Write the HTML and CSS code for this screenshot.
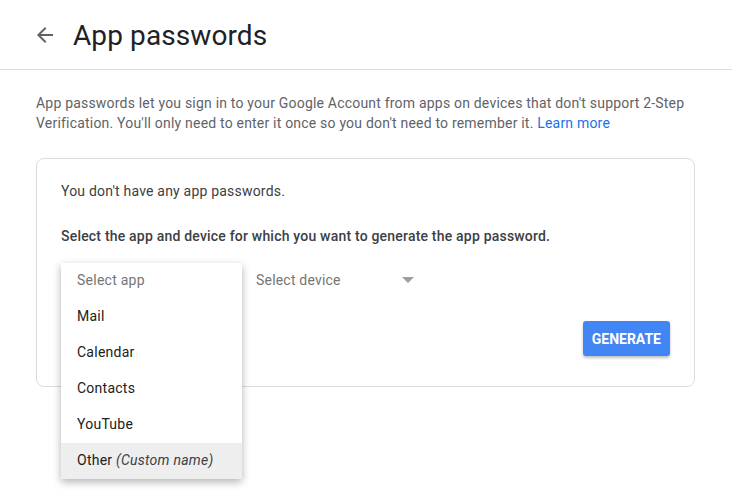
FILE: index.html
```html
<!DOCTYPE html>
<html lang="en">
<head>
<meta charset="UTF-8">
<meta name="viewport" content="width=device-width, initial-scale=1.0">
<title>App passwords</title>
<link rel="stylesheet" href="styles.css">
</head>
<body>
<header class="header">
  <a class="back" href="#" aria-label="Back">
    <svg width="24" height="24" viewBox="0 0 24 24"><path fill="#5f6368" d="M20 11H7.83l5.59-5.59L12 4l-8 8 8 8 1.41-1.41L7.83 13H20v-2z"/></svg>
  </a>
  <h1>App passwords</h1>
</header>

<main class="content">
  <p class="intro">App passwords let you sign in to your Google Account from apps on devices that don't support 2-Step Verification. You'll only need to enter it once so you don't need to remember it. <a href="#">Learn more</a></p>

  <div class="card">
    <p class="empty">You don't have any app passwords.</p>
    <p class="prompt">Select the app and device for which you want to generate the app password.</p>

    <div class="selects">
      <div class="select select-app">
        <span>Select app</span>
        <ul class="menu">
          <li class="placeholder">Select app</li>
          <li>Mail</li>
          <li>Calendar</li>
          <li>Contacts</li>
          <li>YouTube</li>
          <li class="active">Other <em>(Custom name)</em></li>
        </ul>
      </div>
      <div class="select select-device">
        <span>Select device</span>
        <span class="caret"></span>
      </div>
    </div>

    <div class="actions">
      <button class="generate">Generate</button>
    </div>
  </div>
</main>
</body>
</html>
```

FILE: styles.css
```css
html, body {
  min-height: 100%;
}
body {
  margin: 0;
  min-height: 499px;
  font-family: Roboto, Arial, sans-serif;
  background-color: #fff;
  color: #3c4043;
}
.header {
  display: flex;
  align-items: center;
  height: 69px;
  padding-left: 33px;
  border-bottom: 1px solid #dadce0;
}
.back {
  display: flex;
  margin-right: 16px;
}
.header h1 {
  margin: 0;
  font-size: 28px;
  font-weight: 400;
  letter-spacing: 0.1px;
  color: #202124;
  margin-top: 2px;
}
.content {
  padding: 23px 36px 0 36px;
}
.intro {
  margin: 0 0 25px 0;
  font-size: 14px;
  line-height: 20px;
  letter-spacing: 0.2px;
  color: #5f6368;
}
.intro a {
  color: #1a73e8;
  text-decoration: none;
}
.card {
  width: 659px;
  box-sizing: border-box;
  border: 1px solid #dadce0;
  border-radius: 8px;
  padding: 22px 24px 30px 24px;
}
.card p {
  margin: 0;
  font-size: 14px;
  line-height: 20px;
  letter-spacing: 0.2px;
  color: #3c4043;
}
.card .prompt {
  margin-top: 25px;
  font-weight: 500;
}
.selects {
  display: flex;
  margin-top: 16px;
  height: 36px;
}
.select {
  position: relative;
  display: flex;
  align-items: center;
  font-size: 14px;
  letter-spacing: 0.2px;
  color: #757575;
}
.select-app {
  width: 181px;
  padding-left: 16px;
  box-sizing: border-box;
}
.select-device {
  width: 160px;
  margin-left: 14px;
  justify-content: space-between;
}
.caret {
  width: 0;
  height: 0;
  border-left: 6px solid transparent;
  border-right: 6px solid transparent;
  border-top: 6px solid #9e9e9e;
  margin-right: 2px;
}
.menu {
  position: absolute;
  top: 1px;
  left: 0;
  width: 181px;
  margin: 0;
  padding: 0;
  list-style: none;
  background-color: #fff;
  box-shadow: 0 3px 8px rgba(0, 0, 0, 0.3);
  z-index: 2;
}
.menu li {
  height: 36px;
  line-height: 35px;
  padding-left: 16px;
  font-size: 14px;
  letter-spacing: 0.25px;
  color: #212121;
}
.menu .placeholder {
  color: #757575;
}
.menu .active {
  background-color: #eeeeee;
}
.menu em {
  color: #3c4043;
}
.actions {
  display: flex;
  justify-content: flex-end;
  margin-top: 23px;
}
.generate {
  height: 35px;
  padding: 0 9px;
  font-family: Roboto, Arial, sans-serif;
  font-size: 14px;
  font-weight: 700;
  text-transform: uppercase;
  color: #fff;
  background-color: #4285f4;
  border: none;
  border-radius: 3px;
  box-shadow: 0 2px 3px rgba(0, 0, 0, 0.25);
  cursor: pointer;
}
```
